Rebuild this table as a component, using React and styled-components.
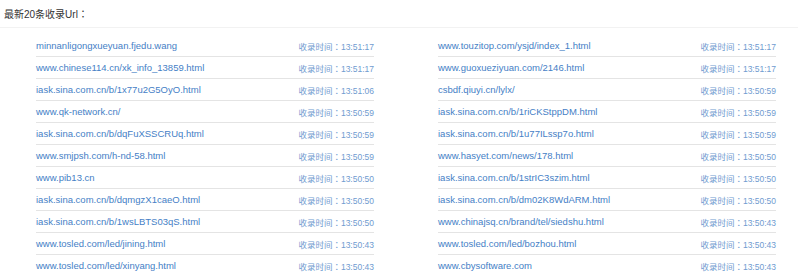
import styled, { createGlobalStyle } from "styled-components";

const rows = [
	["minnanligongxueyuan.fjedu.wang", "13:51:17", "www.touzitop.com/ysjd/index_1.html", "13:51:17"],
	["www.chinese114.cn/xk_info_13859.html", "13:51:17", "www.guoxueziyuan.com/2146.html", "13:51:17"],
	["iask.sina.com.cn/b/1x77u2G5OyO.html", "13:51:06", "csbdf.qiuyi.cn/lylx/", "13:50:59"],
	["www.qk-network.cn/", "13:50:59", "iask.sina.com.cn/b/1riCKStppDM.html", "13:50:59"],
	["iask.sina.com.cn/b/dqFuXSSCRUq.html", "13:50:59", "iask.sina.com.cn/b/1u77ILssp7o.html", "13:50:59"],
	["www.smjpsh.com/h-nd-58.html", "13:50:59", "www.hasyet.com/news/178.html", "13:50:50"],
	["www.pib13.cn", "13:50:50", "iask.sina.com.cn/b/1strIC3szim.html", "13:50:50"],
	["iask.sina.com.cn/b/dqmgzX1caeO.html", "13:50:50", "iask.sina.com.cn/b/dm02K8WdARM.html", "13:50:50"],
	["iask.sina.com.cn/b/1wsLBTS03qS.html", "13:50:50", "www.chinajsq.cn/brand/tel/siedshu.html", "13:50:43"],
	["www.tosled.com/led/jining.html", "13:50:43", "www.tosled.com/led/bozhou.html", "13:50:43"],
	["www.tosled.com/led/xinyang.html", "13:50:43", "www.cbysoftware.com", "13:50:43"],
];

const items = rows.flatMap(([u1, t1, u2, t2]) => [
	{ url: u1, time: t1 },
	{ url: u2, time: t2 },
]);

function App() {
	return (
		<>
			<GlobalStyle />
			<Wrapper>
				<Header>
					最新20条收录Url<Colon>：</Colon>
				</Header>
				<List>
					{items.map((item, i) => (
						<Item key={i}>
							<Link href="#">{item.url}</Link>
							<Time>
								收录时间<Colon>：</Colon>
								{item.time}
							</Time>
						</Item>
					))}
				</List>
			</Wrapper>
		</>
	);
}

const GlobalStyle = createGlobalStyle`
	html, body {
		margin: 0;
		padding: 0;
		background: #fff;
		overflow: hidden;
	}
	body {
		font-family: "Liberation Sans", "Noto Sans CJK SC", sans-serif;
	}
`;

const Wrapper = styled.div`
	width: 798px;
	height: 276px;
	overflow: hidden;
`;

const Header = styled.div`
	height: 27px;
	line-height: 27px;
	padding-left: 4px;
	font-size: 10px;
	color: #333;
	border-bottom: 1px solid #f2f2f2;
`;

const Colon = styled.span`
	font-family: "Noto Sans CJK JP", sans-serif;
`;

const List = styled.div`
	display: grid;
	grid-template-columns: 338px 338px;
	column-gap: 64px;
	padding: 7px 0 0 36px;
`;

const Item = styled.div`
	display: flex;
	justify-content: space-between;
	align-items: center;
	height: 21px;
	border-bottom: 1px solid #e4e4e4;
	font-size: 9px;
`;

const Link = styled.a`
	color: #4580c6;
	text-decoration: none;
	font-size: 9.5px;
`;

const Time = styled.span`
	color: #6f9bd0;
	font-size: 8.5px;
`;

export default App;
